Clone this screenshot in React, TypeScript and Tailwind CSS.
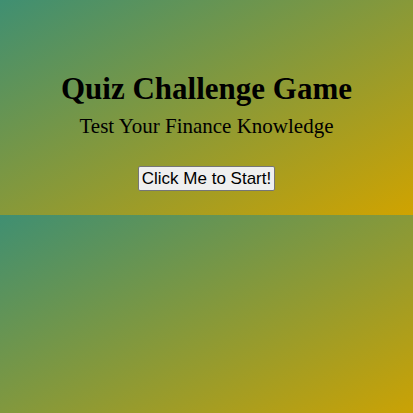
export default function App() {
  return (
    <div className="min-h-screen bg-[linear-gradient(to_bottom_right,#3f8f72,#d0a300)] bg-[length:100%_215px] bg-repeat font-['Liberation_Serif',serif] text-black">
      <div className="h-[215px] pt-[71px] text-center">
        <h1 className="text-[31px] font-bold leading-[36px]">Quiz Challenge Game</h1>
        <p className="mt-[7px] text-[21px] leading-[24px]">Test Your Finance Knowledge</p>
        <button className="mt-[28px] rounded-[2px] border border-[#767676] bg-[#efefef] px-[3px] py-[2px] font-['Liberation_Sans',sans-serif] text-[17px] leading-[19px] text-black">
          Click Me to Start!
        </button>
      </div>
    </div>
  )
}
